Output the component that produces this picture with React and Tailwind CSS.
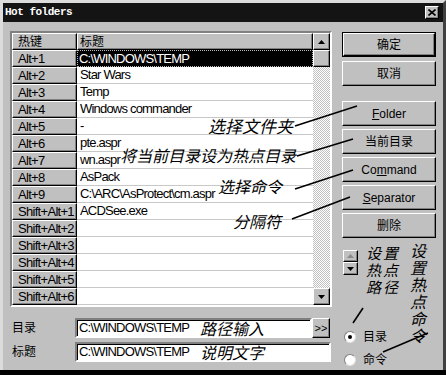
import React from "react";

const ROWS = [
  ["Alt+1", "C:\\WINDOWS\\TEMP"],
  ["Alt+2", "Star Wars"],
  ["Alt+3", "Temp"],
  ["Alt+4", "Windows commander"],
  ["Alt+5", "-"],
  ["Alt+6", "pte.aspr"],
  ["Alt+7", "wn.aspr"],
  ["Alt+8", "AsPack"],
  ["Alt+9", "C:\\ARC\\AsProtect\\cm.aspr"],
  ["Shift+Alt+1", "ACDSee.exe"],
  ["Shift+Alt+2", ""],
  ["Shift+Alt+3", ""],
  ["Shift+Alt+4", ""],
  ["Shift+Alt+5", ""],
  ["Shift+Alt+6", ""],
];

const raised =
  "bg-[#c0c0c0] border border-t-white border-l-white border-r-black border-b-black shadow-[inset_-1px_-1px_0_#808080]";
const sunken =
  "border-2 border-t-[#808080] border-l-[#808080] border-r-white border-b-white shadow-[inset_1px_1px_0_#000]";
const note = "absolute italic leading-none text-black font-['Liberation_Sans','Noto_Sans_CJK_SC',sans-serif]";

function Arrow({ up, dim }) {
  return (
    <svg width="7" height="4" viewBox="0 0 7 4">
      <polygon points={up ? "3.5,0 7,4 0,4" : "0,0 7,0 3.5,4"} fill={dim ? "#8a8a8a" : "#000"} />
    </svg>
  );
}

function Btn({ children, def }) {
  return (
    <div className={def ? "border border-black" : ""}>
      <div className={`${raised} ${def ? "h-[23px]" : "h-[25px]"} flex items-center justify-center text-[12px]`}>
        {children}
      </div>
    </div>
  );
}

export default function App() {
  return (
    <div className="relative w-[446px] h-[375px] bg-black overflow-hidden font-['Liberation_Sans','Noto_Sans_CJK_SC',sans-serif] text-black">
      <div className="h-[370px] bg-[#c0c0c0] border-t-[3px] border-l-[3px] border-r-[3px] border-t-[#dcdcdc] border-l-[#dcdcdc] border-r-[#404040] flex flex-col">
        {/* title bar */}
        <div className="h-[19px] bg-[#141414] flex items-center justify-between pl-[2px] pr-[4px]">
          <span className="font-['Liberation_Mono',monospace] text-[11px] tracking-[-0.5px] text-white font-bold">Hot folders</span>
          <div className={`${raised} w-[14px] h-[13px] flex items-center justify-center`}>
            <svg width="8" height="7" viewBox="0 0 8 7">
              <path d="M0.5 0.5L7.5 6.5M7.5 0.5L0.5 6.5" stroke="#000" strokeWidth="1.6" />
            </svg>
          </div>
        </div>

        <div className="flex pt-[9px] pl-[7px]">
          {/* left side */}
          <div className="w-[322px]">
            <div className={`${sunken} h-[276px] flex bg-white`}>
              <div className="w-[301px] flex flex-col">
                <div className="flex h-[17px]">
                  <div className={`${raised} w-[65px] pl-[5px] text-[12px] flex items-center`}>热键</div>
                  <div className={`${raised} flex-1 pl-[2px] text-[12px] flex items-center`}>标题</div>
                </div>
                {ROWS.map(([k, t], i) => (
                  <div key={k} className="flex h-[17px]">
                    <div className={`${raised} w-[65px] pl-[5px] text-[13px] tracking-[-0.7px] flex items-center`}>{k}</div>
                    {i === 0 ? (
                      <div className="flex-1 bg-black text-white pl-[2px] text-[13px] tracking-[-0.8px] flex items-center outline outline-1 outline-dotted outline-[#bbbbbb] -outline-offset-1">
                        {t}
                      </div>
                    ) : (
                      <div className="flex-1 bg-white border-b border-b-[#c8c8c8] pl-[3px] text-[13px] tracking-[-0.8px] flex items-center">
                        {t}
                      </div>
                    )}
                  </div>
                ))}
              </div>
              <div className="w-[17px] flex flex-col bg-[image:repeating-conic-gradient(#ffffff_0%_25%,#c0c0c0_0%_50%)] bg-[length:2px_2px]">
                <div className={`${raised} h-[17px] flex items-center justify-center`}>
                  <Arrow up />
                </div>
                <div className={`${raised} h-[17px]`} />
                <div className="flex-1" />
                <div className={`${raised} h-[17px] flex items-center justify-center`}>
                  <Arrow />
                </div>
              </div>
            </div>

            <div className="mt-[11px] flex items-center">
              <span className="w-[65px] pl-[2px] text-[12px]">目录</span>
              <div className={`${sunken} bg-white w-[237px] h-[20px] flex items-center pl-[2px] text-[13px] tracking-[-0.8px]`}>
                C:\WINDOWS\TEMP
              </div>
              <div className={`${raised} w-[18px] h-[20px] flex items-center justify-center text-[11px]`}>&gt;&gt;</div>
            </div>
            <div className="mt-[4px] flex items-center">
              <span className="w-[65px] pl-[2px] text-[12px]">标题</span>
              <div className={`${sunken} bg-white w-[256px] h-[20px] flex items-center pl-[2px] text-[13px] tracking-[-0.8px]`}>
                C:\WINDOWS\TEMP
              </div>
            </div>
          </div>

          {/* right side */}
          <div className="ml-[10px] w-[94px] mt-[1px] flex flex-col">
            <Btn def>确定</Btn>
            <div className="mt-[4px]"><Btn>取消</Btn></div>
            <div className="mt-[15px] flex flex-col gap-[3px]">
              <Btn><span><u>F</u>older</span></Btn>
              <Btn>当前目录</Btn>
              <Btn><span>Co<u>m</u>mand</span></Btn>
              <Btn><span><u>S</u>eparator</span></Btn>
              <Btn>删除</Btn>
            </div>
            <div className="mt-[12px] ml-[1px] w-[15px] flex flex-col">
              <div className={`${raised} h-[12px] flex items-center justify-center`}>
                <Arrow up dim />
              </div>
              <div className={`${raised} h-[13px] flex items-center justify-center`}>
                <Arrow />
              </div>
            </div>
            <div className="mt-[53px] flex flex-col gap-[5px] text-[12px]">
              <div className="flex items-center gap-[7px] ml-[2px]">
                <div className="w-[12px] h-[12px] rounded-full bg-white border border-t-[#808080] border-l-[#808080] border-r-[#e0e0e0] border-b-[#e0e0e0] flex items-center justify-center">
                  <div className="w-[4px] h-[4px] rounded-full bg-black" />
                </div>
                <span>目录</span>
              </div>
              <div className="flex items-center gap-[7px] ml-[2px]">
                <div className="w-[12px] h-[12px] rounded-full bg-white border border-t-[#808080] border-l-[#808080] border-r-[#e0e0e0] border-b-[#e0e0e0]" />
                <span>命令</span>
              </div>
            </div>
          </div>
        </div>
      </div>

      {/* annotations */}
      <span className={`${note} left-[208px] top-[119px] text-[17px]`}>选择文件夹</span>
      <span className={`${note} left-[120px] top-[149px] text-[16px]`}>将当前目录设为热点目录</span>
      <span className={`${note} left-[218px] top-[180px] text-[16px]`}>选择命令</span>
      <span className={`${note} left-[233px] top-[215px] text-[16px]`}>分隔符</span>
      <span className={`${note} left-[200px] top-[322px] text-[16px]`}>路径输入</span>
      <span className={`${note} left-[200px] top-[346px] text-[16px]`}>说明文字</span>
      <div className={`${note} left-[366px] top-[245px] text-[15px] tracking-[2px] flex flex-col`}>
        <span className="leading-[17px]">设置</span>
        <span className="leading-[17px]">热点</span>
        <span className="leading-[17px]">路径</span>
      </div>
      <span className={`${note} left-[408px] top-[243px] text-[16px] leading-[18px] tracking-[1px] [writing-mode:vertical-rl]`}>
        设置热点命令
      </span>
      <svg className="absolute left-0 top-0 pointer-events-none" width="446" height="375">
        <g stroke="#000" strokeWidth="1.6">
          <line x1="295" y1="126" x2="357" y2="106" />
          <line x1="297" y1="156" x2="353" y2="139" />
          <line x1="295" y1="189" x2="353" y2="170" />
          <line x1="292" y1="219" x2="350" y2="197" />
          <line x1="363" y1="308" x2="353" y2="323" />
          <line x1="383" y1="352" x2="428" y2="333" />
        </g>
      </svg>
    </div>
  );
}
